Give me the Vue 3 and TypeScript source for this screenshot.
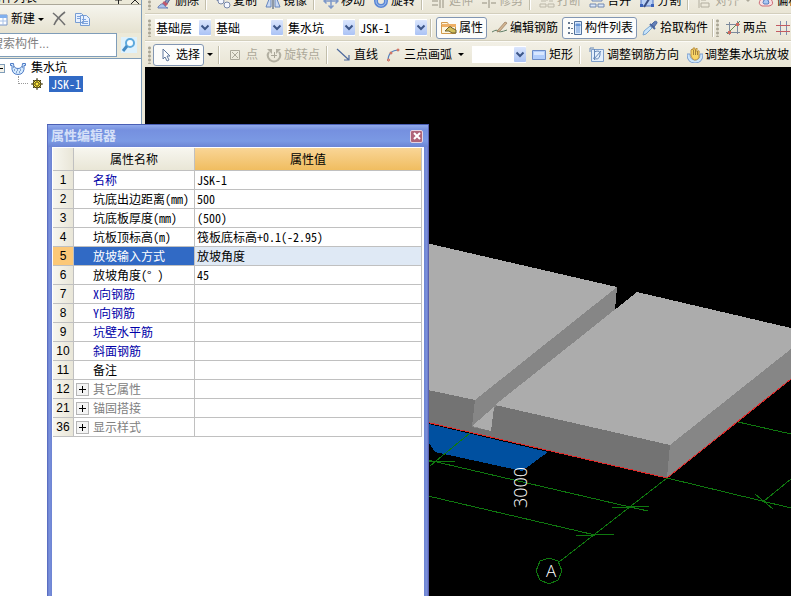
<script setup lang="ts">
import { ref } from 'vue'

type Tool =
  | { kind: 'button'; icon: string; label: string; disabled?: boolean; pressed?: boolean }
  | { kind: 'arrow'; label: string; disabled?: boolean }
  | { kind: 'select'; label: string; options: string[]; size: string }
  | { kind: 'sep' }
  | { kind: 'grip' }

const btn = (icon: string, label: string, state: { disabled?: boolean; pressed?: boolean } = {}): Tool => ({
  kind: 'button',
  icon,
  label,
  ...state,
})
const sep: Tool = { kind: 'sep' }
const grip: Tool = { kind: 'grip' }
const off = { disabled: true }

const toolbars: { name: string; tools: Tool[] }[] = [
  {
    name: '修改',
    tools: [
      grip, btn('brush', '删除'), sep, btn('copy', '复制'), btn('mirror', '镜像'), sep,
      btn('move', '移动'), btn('rotate', '旋转'), sep, btn('extend', '延伸', off), btn('trim', '修剪', off), sep,
      btn('break', '打断', off), btn('merge', '合并'), btn('split', '分割'), sep,
      btn('align', '对齐', off), { kind: 'arrow', label: '对齐方式', disabled: true }, btn('offset', '偏移'),
    ],
  },
  {
    name: '构件',
    tools: [
      grip,
      { kind: 'select', label: '楼层', options: ['基础层'], size: 'short' },
      { kind: 'select', label: '类别', options: ['基础'], size: 'normal' },
      { kind: 'select', label: '构件类型', options: ['集水坑'], size: 'normal' },
      { kind: 'select', label: '构件名称', options: ['JSK-1'], size: 'normal' },
      sep,
      btn('property', '属性', { pressed: true }), btn('pen', '编辑钢筋'), btn('list', '构件列表', { pressed: true }),
      btn('dropper', '拾取构件'), sep, grip, btn('twoPoint', '两点'), btn('parallel', '平行'),
    ],
  },
  {
    name: '绘图',
    tools: [
      grip, btn('cursor', '选择', { pressed: true }), { kind: 'arrow', label: '选择方式' }, sep,
      btn('point', '点', off), btn('rotPoint', '旋转点', off), sep,
      btn('line', '直线'), btn('arc', '三点画弧'), { kind: 'arrow', label: '画弧方式' },
      { kind: 'select', label: '半径', options: [''], size: 'tiny' },
      btn('rect', '矩形'), sep, btn('barDir', '调整钢筋方向'), btn('pitSlope', '调整集水坑放坡'),
    ],
  },
]

const icons: Record<string, string> = {
  brush: '<path d="M8 9 13 1h2v2l-5 8z" fill="#8796bd" stroke="#4d5d8f"/><path d="M7 8l4 3-3 3-4-2z" fill="#c05a6c"/><path d="M1 14q4-5 6-2t4 3H1z" fill="#aac5ee" stroke="#6f83b6"/>',
  copy: '<g fill="#f4f7ff" stroke="#7888a9"><circle cx="4" cy="5" r="3"/><circle cx="6" cy="8" r="3"/><circle cx="12" cy="12" r="3"/></g>',
  mirror: '<path d="M6 1v13H1zM10 1v13h5z" fill="#cadaf3" stroke="#6685bc"/><path d="M8 0v16" stroke="#31486e"/>',
  move: '<path d="M8 1v14M1 8h14M5.500 3.500 8 1l2.500 2.500M5.500 12.500 8 15l2.500-2.500M3.500 5.500 1 8l2.500 2.500M12.500 5.500 15 8l-2.500 2.500" fill="none" stroke="#7d98c9" stroke-width="1.500"/>',
  rotate: '<circle cx="8" cy="8" r="5" fill="none" stroke="#5b87d4" stroke-width="4"/><circle cx="8" cy="8" r="5" fill="none" stroke="#a6c3f2" stroke-width="1"/>',
  extend: '<path d="M1 4h6M1 8h6M1 12h6M9 2v13M12 2v13" stroke="#c0bcad" stroke-width="2"/>',
  trim: '<path d="M1 4h5M1 10h5M8 1v14M10 4h5M10 10h5" stroke="#c0bcad" stroke-width="2"/>',
  break: '<path d="M8 1v7M2 8h5M10 8h4M1 11h6v3H1zM9 11h6v3H9z" fill="none" stroke="#bbb7a8"/>',
  merge: '<path d="M3 4h10v4H3zM1 11h6v3H1zM9 11h6v3H9z" fill="#dce8fa" stroke="#7288b0"/>',
  split: '<path d="M2 5h12v8H2z" fill="#b9d0f5" stroke="#4d73c8"/><path d="M12 3 5 14" stroke="#3b4d80" stroke-width="2"/><g fill="#3b62ba"><path d="M1 4h3v3H1zM12 4h3v3h-3zM1 11h3v3H1zM12 11h3v3h-3z"/></g>',
  align: '<path d="M2 1v14M4 3h5v4H4zM4 10h8v4H4z" fill="none" stroke="#b2ae9f"/>',
  offset: '<path d="M4 13Q-1 11 3 6q5-8 10 0 4 6-2 7z" fill="#f8dfe2" stroke="#cd6c76"/><path d="M6 11q-2-1 0-4 2-2 4 0 2 4 0 4z" fill="#a9c8f3" stroke="#577dbd"/>',
  property: '<path d="M.5 4.500V2.500h6l1 2h7v9H.5z" fill="#fdf6e0" stroke="#d29a4d"/><path d="M1 4h14v3H1z" fill="#eeb067"/><path d="M4 11 8 7q2-1 3 1l4 2v3l-4 0-3-2z" fill="#d4c05b" stroke="#6b5c2c"/>',
  pen: '<path d="M0 12q5-3 6-1t9-1" fill="none" stroke="#5f7d66"/><path d="m6 10 7-8 2 1-7 8-3 1z" fill="#d3b592" stroke="#93795c" stroke-width=".7"/>',
  list: '<path d="M7.500 1.500h7v13h-7z" fill="#d9e8fc" stroke="#52739f"/><path d="M9 4h4v2H9zM9 8h4M9 10h4M9 12h4" fill="#5d8fd8" stroke="#6d98d5"/><path d="M1 2h2v2H1zM1 7h2v2H1zM1 12h2v2H1zM4 3h2v1H4zM4 8h2v1H4zM4 13h2v1H4z" fill="#66788e"/>',
  dropper: '<path d="m9 5 3-3q3-2 3 1l-3 4z" fill="#6480b8" stroke="#4a66a0"/><path d="m8 4 5 5" stroke="#4a66a0" stroke-width="2"/><path d="m8 6 2 2-6 6-3 1 1-4z" fill="#c8e4fa" stroke="#7ba6d2"/>',
  twoPoint: '<path d="M4.500 2v13M12.500 1v13M1 4.500h14M1 12.500h14" stroke="#7d8a9c"/><path d="M2 14 15 1" stroke="#698c50"/><path d="M3 11h3v3H3zM11 3h3v3h-3z" fill="#cf6a60"/>',
  parallel: '<path d="M5.500 1v14M11.500 1v14" stroke="#7b8cae"/><path d="M1 5.500h14M1 11.500h14" stroke="#c35b62"/>',
  cursor: '<path d="M5 2v10l2-2 2 4 2-1-2-4h3z" fill="#fff" stroke="#60789d"/>',
  point: '<path d="M2.500 3.500h9v9h-9zM4 5l6 6M10 5l-6 6" fill="none" stroke="#aaa799"/>',
  rotPoint: '<path d="M3 5q-3 4 1 8 4 3 8 0 4-4 1-8" fill="none" stroke="#b2afa1" stroke-width="2"/><path d="M1 2h5v5zM15 2h-5v5z" fill="#b2afa1"/><path d="M5 8.500h6M8.500 5v6" stroke="#aaa799"/>',
  line: '<path d="M1 2 13 13M13 8v5H8" fill="none" stroke="#4f6b9e" stroke-width="1.200"/>',
  arc: '<path d="M2 14Q2 3 13 3" fill="none" stroke="#5682be" stroke-width="1.200"/><g fill="#f8d4c8" stroke="#cc5b47"><circle cx="2.500" cy="13" r="1"/><circle cx="5" cy="6" r="1"/><circle cx="12" cy="3" r="1"/></g>',
  rect: '<path d="M1.500 3.500h13v9h-13z" fill="#b1cdfb" stroke="#6c8cc6"/><path d="M3 5h10v3H3z" fill="#d8e7ff"/>',
  barDir: '<path d="M2.500 2.500h12v12h-12z" fill="#e4effc" stroke="#7f9fca"/><path d="M1 5V1h4M5 5q7-3 6 3t-7 3M5.500 2v11M12 4 5 12" fill="none" stroke="#6688b8"/>',
  pitSlope: '<path d="M0 7h3q0 6 5 6t5-6h3q0 9-8 9T0 7z" fill="#cce5fa" stroke="#7c9fd0"/><path d="M4 9V3q1-2 2 0V1h2v2l2-2v4q3-3 2 1v5q-5 5-8-2z" fill="#f8d567" stroke="#bd9445"/><path d="M6.500 3v5M8.500 3v5M10.500 4v4" stroke="#a5813a"/>',
  newItem: '<path d="M1 4h14v10H1z" fill="#fff" stroke="#7795c8"/><path d="M1 4h14v3H1z" fill="#81b0ee"/><path d="M1 10h14M6 7v7M11 7v7" stroke="#a8c2e8"/>',
  remove: '<path d="M2 2q5 4 12 12M14 1Q6 7 3 14" fill="none" stroke="#707070" stroke-width="1.600"/>',
  pages: '<path d="M1.500 2.500h6l2 2v7h-8zM6.500 4.500h6l3 3v7h-9z" fill="#e8f1ff" stroke="#779dd3"/><path d="M3 5.500h3M3 7.500h3M8 8.500h4M8 10.500h6M8 12.500h6" stroke="#7da3dc"/>',
  search: '<path d="M0 0h16v16H0z" fill="#def1fc"/><circle cx="9" cy="6" r="4" fill="#f5fcff" stroke="#5da9dd" stroke-width="2"/><path d="m6 9-4 5" stroke="#438bc5" stroke-width="3"/>',
  pit: '<path d="M.5 3.500h3q0 5 4.500 5t4.500-5h3v2H14q1 9-6 9T2 5.500H.5z" fill="#d4eaff" stroke="#4f7cc6"/><path d="M3 7h1M4 10h1M7 10h1M10 10h1M6 12h1M9 12h1M12 7h1" stroke="#345c9f"/>',
  gear: '<circle cx="6" cy="6" r="4" fill="#ffed3a" stroke="#463f16"/><path d="M6 0v12M0 6h12M2 2l8 8M10 2l-8 8" stroke="#463f16"/><circle cx="6" cy="6" r="2" fill="#ffe83a" stroke="#77651c"/>',
}

interface Row {
  no: number
  name: string
  value: string
  tone?: 'link' | 'group'
}

const rows: Row[] = [
  { no: 1, name: '名称', value: 'JSK-1', tone: 'link' },
  { no: 2, name: '坑底出边距离(mm)', value: '500' },
  { no: 3, name: '坑底板厚度(mm)', value: '(500)' },
  { no: 4, name: '坑板顶标高(m)', value: '筏板底标高+0.1(-2.95)' },
  { no: 5, name: '放坡输入方式', value: '放坡角度' },
  { no: 6, name: '放坡角度(° )', value: '45' },
  { no: 7, name: 'X向钢筋', value: '', tone: 'link' },
  { no: 8, name: 'Y向钢筋', value: '', tone: 'link' },
  { no: 9, name: '坑壁水平筋', value: '', tone: 'link' },
  { no: 10, name: '斜面钢筋', value: '', tone: 'link' },
  { no: 11, name: '备注', value: '' },
  { no: 12, name: '其它属性', value: '', tone: 'group' },
  { no: 21, name: '锚固搭接', value: '', tone: 'group' },
  { no: 36, name: '显示样式', value: '', tone: 'group' },
]

const current = ref(5)
const editorOpen = ref(true)
</script>

<template>
  <div class="app">
    <aside class="sidebar">
      <header class="panel-title">
        <span>构件列表</span>
        <svg class="panel-marks" viewBox="0 0 28 5" aria-hidden="true">
          <path d="M2 1h7M5.500 0v5M18 5l4-4 4 4" fill="none" stroke="#222" />
        </svg>
      </header>
      <div class="panel-tools">
        <button type="button" class="new">
          <svg class="icon" viewBox="0 0 16 16" v-html="icons.newItem" />新建<i class="caret" />
        </button>
        <button type="button" aria-label="删除构件"><svg class="icon" viewBox="0 0 16 16" v-html="icons.remove" /></button>
        <button type="button" aria-label="复制构件"><svg class="icon" viewBox="0 0 16 16" v-html="icons.pages" /></button>
      </div>
      <form class="search" @submit.prevent>
        <input type="text" placeholder="搜索构件..." aria-label="搜索构件" />
        <button type="submit" aria-label="搜索"><svg class="icon" viewBox="0 0 16 16" v-html="icons.search" /></button>
      </form>
      <ul class="tree">
        <li>
          <div class="node">
            <button type="button" class="fold" aria-label="折叠"></button>
            <svg class="icon" viewBox="0 0 16 16" v-html="icons.pit" />
            <span>集水坑</span>
          </div>
          <ul>
            <li class="node leaf">
              <i class="branch" />
              <svg class="icon-small" viewBox="0 0 12 12" v-html="icons.gear" />
              <span class="chosen">JSK-1</span>
            </li>
          </ul>
        </li>
      </ul>
    </aside>

    <main class="workspace">
      <div class="toolbars">
        <div v-for="bar in toolbars" :key="bar.name" class="toolbar" role="toolbar" :aria-label="bar.name">
          <template v-for="(t, i) in bar.tools" :key="i">
            <i v-if="t.kind === 'grip'" class="grip" />
            <i v-else-if="t.kind === 'sep'" class="sep" />
            <button v-else-if="t.kind === 'arrow'" type="button" class="arrow" :disabled="t.disabled" :aria-label="t.label">
              <i class="caret" />
            </button>
            <span v-else-if="t.kind === 'select'" class="combo" :class="t.size">
              <select :aria-label="t.label">
                <option v-for="o in t.options" :key="o">{{ o }}</option>
              </select>
              <svg viewBox="0 0 12 15" aria-hidden="true">
                <path d="M2.500 5.500 6 9l3.500-3.500" fill="none" stroke="#3c5688" stroke-width="2" />
              </svg>
            </span>
            <button v-else type="button" class="tool" :class="{ pressed: t.pressed }" :disabled="t.disabled">
              <svg class="icon" viewBox="0 0 16 16" v-html="icons[t.icon]" />{{ t.label }}
            </button>
          </template>
        </div>
      </div>

      <svg class="scene" viewBox="145 67 646 529" preserveAspectRatio="xMinYMin slice" shape-rendering="crispEdges">
        <path d="M429 424 548 452 522 471 435 452 429 443z" fill="#0050a0" />
        <path d="M400 384 475 400 495 405 670 445 667 478 400 416z" fill="#737373" />
        <path d="M475 400 617 287 615 310 494 408 491 431 472 427z" fill="#868686" />
        <path d="M494 407 491 431 472 426z" fill="#acacac" />
        <path d="M400 237 617 287 475 400 400 384z" fill="#acacac" />
        <path d="M637 292 791 328V349L670 445 495 405z" fill="#acacac" />
        <path d="M670 445 791 349V379L667 478z" fill="#868686" />
        <path d="M400 416 667 478 791 379" fill="none" stroke="#e02828" />
        <g fill="none" stroke="#0f780f">
          <path d="M470 433 430 466M429 461H455M428 460 630 507 648 511M612 508 649 506" />
          <path d="M428 496 595 535M576 536 614 534M667 478 559 562" />
          <path d="M667 478 791 508M791 479 764 501M755 494 773 509M738 422 791 434" />
          <path d="m549 558 9 3 4 10-4 9-9 4-9-4-4-9 4-10z" />
        </g>
        <g class="marks">
          <text transform="translate(527 508) rotate(-90)">3000</text>
          <text x="546" y="577" class="axis">A</text>
        </g>
      </svg>
    </main>

    <section v-if="editorOpen" class="editor" role="dialog" aria-labelledby="editor-title">
      <header class="editor-bar">
        <h1 id="editor-title">属性编辑器</h1>
        <button type="button" class="close" aria-label="关闭" @click="editorOpen = false">
          <svg viewBox="0 0 8 8"><path d="m1 1 6 6M7 1 1 7" stroke="#fff" stroke-width="2" /></svg>
        </button>
      </header>
      <div class="editor-body">
        <table>
          <thead>
            <tr>
              <th class="no"></th>
              <th class="name">属性名称</th>
              <th class="value">属性值</th>
            </tr>
          </thead>
          <tbody>
            <tr v-for="r in rows" :key="r.no" :class="[r.tone, { current: current === r.no }]" @click="current = r.no">
              <th class="no" scope="row">{{ r.no }}</th>
              <td class="name">
                <div class="label">
                  <button v-if="r.tone === 'group'" type="button" class="expand" :aria-label="'展开' + r.name"></button>
                  <span v-else class="indent" />
                  <span>{{ r.name }}</span>
                </div>
              </td>
              <td class="value">{{ r.value }}</td>
            </tr>
          </tbody>
        </table>
      </div>
    </section>
  </div>
</template>

<style>
body {
  margin: 0;
  overflow: hidden;
}
</style>

<style scoped>
.app {
  position: relative;
  display: grid;
  grid-template-columns: 142px minmax(0, 1fr);
  gap: 3px;
  height: 100vh;
  overflow: hidden;
  background: #ece9d8;
  color: #000;
  font: 12px/16px "Liberation Sans", "Noto Sans CJK SC", sans-serif;
}
button,
input,
select {
  margin: 0;
  padding: 0;
  border: 0;
  background: none;
  color: inherit;
  font: inherit;
}
ul {
  margin: 0;
  padding: 0;
  list-style: none;
}
.icon {
  flex: none;
  width: 16px;
  height: 16px;
}
.icon-small {
  flex: none;
  width: 12px;
  height: 12px;
}
.caret {
  border: 3px solid transparent;
  border-top-color: currentColor;
  border-bottom: 0;
}

.sidebar {
  display: flex;
  flex-direction: column;
  min-width: 0;
  overflow: hidden;
  box-sizing: border-box;
  border-right: 1px solid #7f9db9;
}
.panel-title {
  display: flex;
  align-items: flex-end;
  justify-content: space-between;
  height: 4px;
  margin-left: -11px;
  border-bottom: 1px solid #aca899;
  line-height: 12px;
  overflow: hidden;
}
.panel-marks {
  width: 28px;
  height: 5px;
}
.panel-tools {
  display: flex;
  align-items: center;
  gap: 7px;
  height: 28px;
  margin-left: -8px;
  background: linear-gradient(#f6f5ee, #e6e2d0);
}
.panel-tools button {
  display: flex;
  align-items: center;
}
.panel-tools .new {
  gap: 3px;
}
.search {
  display: flex;
  height: 24px;
  margin-left: -12px;
}
.search input {
  flex: 1;
  min-width: 0;
  padding: 0 2px 3px;
  border: 1px solid #7f9db9;
  background: #fff;
}
.search input::placeholder {
  color: #808080;
  opacity: 1;
}
.search button {
  display: grid;
  place-items: center;
  width: 24px;
}
.tree {
  flex: 1;
  margin-top: 1px;
  padding-top: 1px;
  border-top: 1px solid #7f9db9;
  background: #fff;
}
.tree ul {
  padding: 0;
  border: 0;
  margin: 0;
}
.node {
  display: flex;
  align-items: center;
  gap: 5px;
  margin-left: -4px;
}
.fold {
  width: 9px;
  height: 9px;
  box-sizing: border-box;
  border: 1px solid #7f9db9;
  background: linear-gradient(#000, #000) center / 5px 1px no-repeat #f3f1e8;
}
.leaf {
  gap: 3px;
  margin-left: 18px;
}
.branch {
  width: 10px;
  height: 8px;
  box-sizing: border-box;
  margin-bottom: 8px;
  border: dotted #999;
  border-width: 0 0 1px 1px;
}
.chosen {
  margin-left: 3px;
  padding: 0 2px;
  background: #316ac5;
  color: #fff;
  font-family: "Noto Sans CJK SC", sans-serif;
  font-feature-settings: "hwid";
}

.workspace {
  display: flex;
  flex-direction: column;
  min-width: 0;
  background: #000;
}
.toolbars {
  display: flex;
  flex-direction: column;
  gap: 1px;
  margin-top: -13px;
  background: #d3cfbd;
}
.toolbar {
  display: flex;
  align-items: center;
  gap: 1px;
  height: 26px;
  box-sizing: border-box;
  padding-left: 2px;
  border-top: 1px solid #fcfbf7;
  background: linear-gradient(#f2f0e6, #e9e5d5);
  overflow: hidden;
}
.toolbar > * {
  flex: none;
}
.grip {
  width: 3px;
  height: 18px;
  margin: 0 1px;
  background: radial-gradient(circle, #aaa695 1px, transparent 2px) 0 0 / 3px 4px;
}
.sep {
  width: 1px;
  height: 18px;
  margin: 0 3px 0 2px;
  border-right: 1px solid #fff;
  background: #c2beab;
}
.sep:has(+ .grip) {
  margin: 0;
}
.tool {
  display: flex;
  align-items: center;
  gap: 2px;
  height: 22px;
  padding: 0 3px 0 4px;
  white-space: nowrap;
}
.tool.pressed {
  border: 1px solid #8296b3;
  border-radius: 3px;
  background: #fcfcfb;
}
.tool:disabled,
.arrow:disabled {
  color: #aca899;
}
.arrow {
  display: grid;
  place-items: center;
  width: 10px;
  height: 22px;
}
.combo {
  display: grid;
  grid-template-columns: minmax(0, 1fr) 12px;
  align-items: center;
  width: 68px;
  height: 17px;
  margin-right: 3px;
  background: #fff;
}
.combo.short {
  width: 56px;
  margin-left: 2px;
}
.combo.tiny {
  width: 54px;
  margin: 0 0 0 5px;
}
.combo select {
  grid-area: 1 / 1 / 2 / 3;
  height: 17px;
  padding: 0 13px 0 1px;
  appearance: none;
  outline: 0;
  font-family: "Noto Sans CJK SC", sans-serif;
  font-feature-settings: "hwid";
  line-height: 14px;
}
.combo svg {
  grid-area: 1 / 2 / 2 / 3;
  height: 15px;
  border-radius: 1px;
  background: linear-gradient(#dbe6fd, #abc3f5);
  pointer-events: none;
}
.combo:last-of-type {
  margin-right: 0;
}
.scene {
  flex: 1;
  display: block;
  width: 100%;
  min-height: 0;
}
.marks {
  fill: #fff;
  font: 300 18px "Open Sans", "Liberation Sans", sans-serif;
}
.axis {
  font-size: 17px;
}

.editor {
  position: absolute;
  top: 124px;
  bottom: 0;
  left: 47px;
  display: flex;
  flex-direction: column;
  width: 382px;
  box-sizing: border-box;
  padding: 0 5px;
  border-top: 1px solid #4a5fb4;
  background: linear-gradient(90deg, #4f62b8, #7c92dd 2px, #6c83d2 5px, #6c83d2 calc(100% - 5px), #7c92dd calc(100% - 2px), #4f50a0);
}
.editor-bar {
  display: flex;
  align-items: center;
  justify-content: space-between;
  height: 22px;
  margin: 0 -4px;
  padding: 0 5px 0 3px;
  background: linear-gradient(#91aaec, #7590df 5px, #7b99e4 16px, #6c85d4);
}
.editor-bar h1 {
  margin: 0;
  color: #d5e0f8;
  font-size: 13px;
  font-weight: 700;
}
.close {
  display: grid;
  place-items: center;
  width: 13px;
  height: 13px;
  box-sizing: border-box;
  border: 1px solid #e3d3e3;
  border-radius: 2px;
  background: #b06478;
}
.close svg {
  width: 8px;
  height: 8px;
}
.editor-body {
  flex: 1;
  padding: 1px 2px 0 1px;
  background: #fff;
}
table {
  width: 100%;
  border-collapse: separate;
  border-spacing: 0;
  table-layout: fixed;
  font-family: "Noto Sans CJK SC", sans-serif;
  font-feature-settings: "hwid";
}
th,
td {
  height: 18px;
  padding: 0;
  border: solid #c0c0c0;
  border-width: 0 1px 1px 0;
  font-weight: 400;
  line-height: 18px;
  text-align: left;
  white-space: nowrap;
}
thead th {
  height: 22px;
  background: linear-gradient(#f7f6ef, #e9e6d6);
  text-align: center;
}
thead .value {
  background: linear-gradient(#f9d596, #f0bd60);
}
.no {
  width: 20px;
  background: linear-gradient(90deg, #f7f6ef, #e9e6d8);
  font-family: "Liberation Sans", sans-serif;
  text-align: center;
}
.name {
  width: 120px;
}
td.value {
  padding-left: 2px;
}
.label {
  display: flex;
  align-items: center;
  gap: 4px;
  padding-left: 2px;
}
.indent {
  width: 13px;
}
.expand {
  width: 13px;
  height: 13px;
  box-sizing: border-box;
  border: 1px solid #b5b5b5;
  background:
    linear-gradient(#000, #000) center / 7px 1px no-repeat,
    linear-gradient(#000, #000) center / 1px 7px no-repeat,
    #f4f4f4;
}
.link .name {
  color: #0000a8;
}
.group .name {
  color: #808080;
}
.current .no {
  background: #fcc877;
}
.current td.name {
  background: #316ac5;
  color: #fff;
}
.current .value {
  background: #dfe9f5;
}
</style>
